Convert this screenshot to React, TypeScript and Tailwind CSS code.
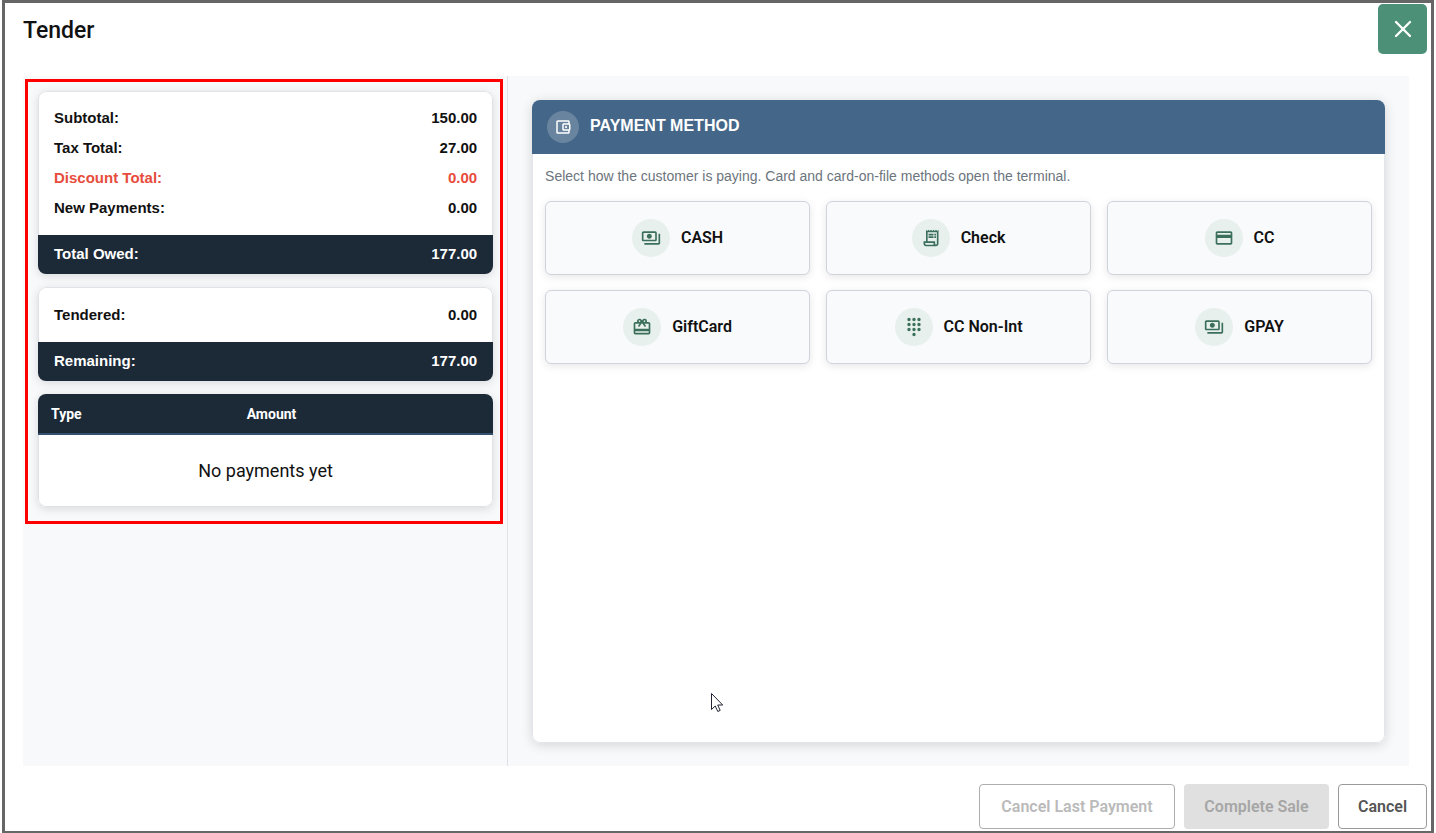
import React from 'react';
import { X } from 'lucide-react';
import type { IconType } from 'react-icons';
import {
  MdCardGiftcard,
  MdCreditCard,
  MdDialpad,
  MdOutlineAccountBalanceWallet,
  MdOutlinePayments,
  MdOutlineReceiptLong,
} from 'react-icons/md';
import { clsx } from 'clsx';

interface SummaryLine {
  label: string;
  value: string;
  negative?: boolean;
}

interface SummaryCardProps {
  lines: SummaryLine[];
  total: SummaryLine;
  className?: string;
}

const paymentMethods: { name: string; icon: IconType }[] = [
  { name: 'CASH', icon: MdOutlinePayments },
  { name: 'Check', icon: MdOutlineReceiptLong },
  { name: 'CC', icon: MdCreditCard },
  { name: 'GiftCard', icon: MdCardGiftcard },
  { name: 'CC Non-Int', icon: MdDialpad },
  { name: 'GPAY', icon: MdOutlinePayments },
];

const SummaryCard: React.FC<SummaryCardProps> = ({ lines, total, className }) => (
  <dl className="overflow-hidden rounded-lg bg-white text-[15px] font-bold shadow-[0_2px_10px_rgba(0,0,0,0.13)]">
    <div className={clsx('rounded-t-lg border border-b-0 border-[#dfe3e8] bg-white px-[15px]', className)}>
      {lines.map((line) => (
        <div
          key={line.label}
          className={clsx('flex h-[30px] items-center justify-between', line.negative ? 'text-[#e74c3c]' : 'text-[#111]')}
        >
          <dt>{line.label}</dt>
          <dd>{line.value}</dd>
        </div>
      ))}
    </div>
    <div className="flex h-[39px] items-center justify-between bg-[#1c2937] px-4 text-white">
      <dt>{total.label}</dt>
      <dd>{total.value}</dd>
    </div>
  </dl>
);

const PaymentsTable: React.FC = () => (
  <div className="overflow-hidden rounded-lg bg-white shadow-[0_2px_10px_rgba(0,0,0,0.13)]">
    <table className="w-full table-fixed border-separate border-spacing-0 font-[Roboto,sans-serif]">
      <thead>
        <tr className="bg-[#1c2937] text-left text-sm text-white">
          <th className="h-[41px] w-[43%] border-b-2 border-[#34506f] px-[13px] font-bold">Type</th>
          <th className="h-[41px] border-b-2 border-[#34506f] px-[13px] font-bold">Amount</th>
        </tr>
      </thead>
      <tbody>
        <tr>
          <td
            colSpan={2}
            className="h-[72px] rounded-b-lg border border-t-0 border-[#dfe3e8] text-center text-lg text-[#111]"
          >
            No payments yet
          </td>
        </tr>
      </tbody>
    </table>
  </div>
);

const PaymentMethods: React.FC = () => (
  <section className="flex flex-1 flex-col overflow-hidden rounded-lg bg-white shadow-[0_2px_12px_rgba(0,0,0,0.15)]">
    <header className="flex h-[54px] items-center gap-[11px] bg-[#446688] px-[15px] text-white">
      <span className="flex size-8 items-center justify-center rounded-full bg-white/20">
        <MdOutlineAccountBalanceWallet size={18} />
      </span>
      <h2 className="pb-[2px] text-base font-bold">PAYMENT METHOD</h2>
    </header>
    <div className="flex-1 rounded-b-lg border border-t-0 border-[#e2e5ea] px-3 pt-3">
      <p className="text-sm text-[#6c757d]">
        Select how the customer is paying. Card and card-on-file methods open the terminal.
      </p>
      <div className="mt-[15px] grid grid-cols-3 gap-x-4 gap-y-[15px]">
        {paymentMethods.map(({ name, icon: Icon }) => (
          <button
            key={name}
            type="button"
            className="flex h-[74px] items-center justify-center gap-[11px] rounded-md border border-[#cfd3dc] bg-[#f9fafc] font-[Roboto,sans-serif] text-base font-semibold text-[#111] shadow-[0_2px_8px_rgba(0,0,0,0.1)]"
          >
            <span className="flex size-[38px] items-center justify-center rounded-full bg-[#e7f0ec] text-[#3b6f5c]">
              <Icon size={20} />
            </span>
            {name}
          </button>
        ))}
      </div>
    </div>
  </section>
);

export default function App() {
  return (
    <div className="flex min-h-screen bg-white px-[2px] font-['Liberation_Sans',Arial,sans-serif] text-[#111]">
      <main className="flex flex-1 flex-col border-3 border-b-2 border-[#666] bg-white">
        <header className="flex h-[73px] items-start justify-between pt-px pr-1 pl-[18px]">
          <h1 className="pt-[9px] font-[Roboto,sans-serif] text-[23px] leading-9 font-medium">Tender</h1>
          <button
            type="button"
            aria-label="Close"
            className="flex h-[50px] w-[49px] items-center justify-center rounded-[5px] bg-[#4d9078] text-white"
          >
            <X size={28} strokeWidth={2} />
          </button>
        </header>

        <div className="mr-[22px] ml-[18px] flex flex-1 bg-[#f7f9fb]">
          <aside className="w-[35%] border-r border-[#dee2e6] pt-[3px] pr-1 pl-[2px]">
            {/* Highlighted totals */}
            <div className="flex flex-col gap-[13px] border-3 border-[#ff0000] pt-[9px] pr-[7px] pb-[14px] pl-[10px]">
              <SummaryCard
                className="pt-[11px] pb-3"
                lines={[
                  { label: 'Subtotal:', value: '150.00' },
                  { label: 'Tax Total:', value: '27.00' },
                  { label: 'Discount Total:', value: '0.00', negative: true },
                  { label: 'New Payments:', value: '0.00' },
                ]}
                total={{ label: 'Total Owed:', value: '177.00' }}
              />
              <SummaryCard
                className="py-3"
                lines={[{ label: 'Tendered:', value: '0.00' }]}
                total={{ label: 'Remaining:', value: '177.00' }}
              />
              <PaymentsTable />
            </div>
          </aside>
          <div className="flex flex-1 px-6 pt-6 pb-[23px]">
            <PaymentMethods />
          </div>
        </div>

        <footer className="flex justify-end gap-[9px] pt-[18px] pr-1 pb-[2px] font-[Roboto,sans-serif] text-base font-semibold">
          <button type="button" disabled className="h-[45px] w-[196px] rounded-[4px] border border-[#adadad] text-[#bababa]">
            Cancel Last Payment
          </button>
          <button type="button" disabled className="h-[45px] w-[145px] rounded-[4px] bg-[#e0e0e0] text-[#a6a6a6]">
            Complete Sale
          </button>
          <button type="button" className="h-[45px] w-[89px] rounded-[4px] border border-[#999] text-[#555]">
            Cancel
          </button>
        </footer>
      </main>

      {/* Mouse pointer */}
      <svg className="absolute top-[692px] left-[710px]" width="14" height="21" viewBox="0 0 14 21" aria-hidden="true">
        <path d="M1.5 1.5v16l3.700-3.500 2.600 5.500 2.400-1.100-2.500-5.400h5z" fill="#fff" stroke="#223" strokeWidth="1" />
      </svg>
    </div>
  );
}
